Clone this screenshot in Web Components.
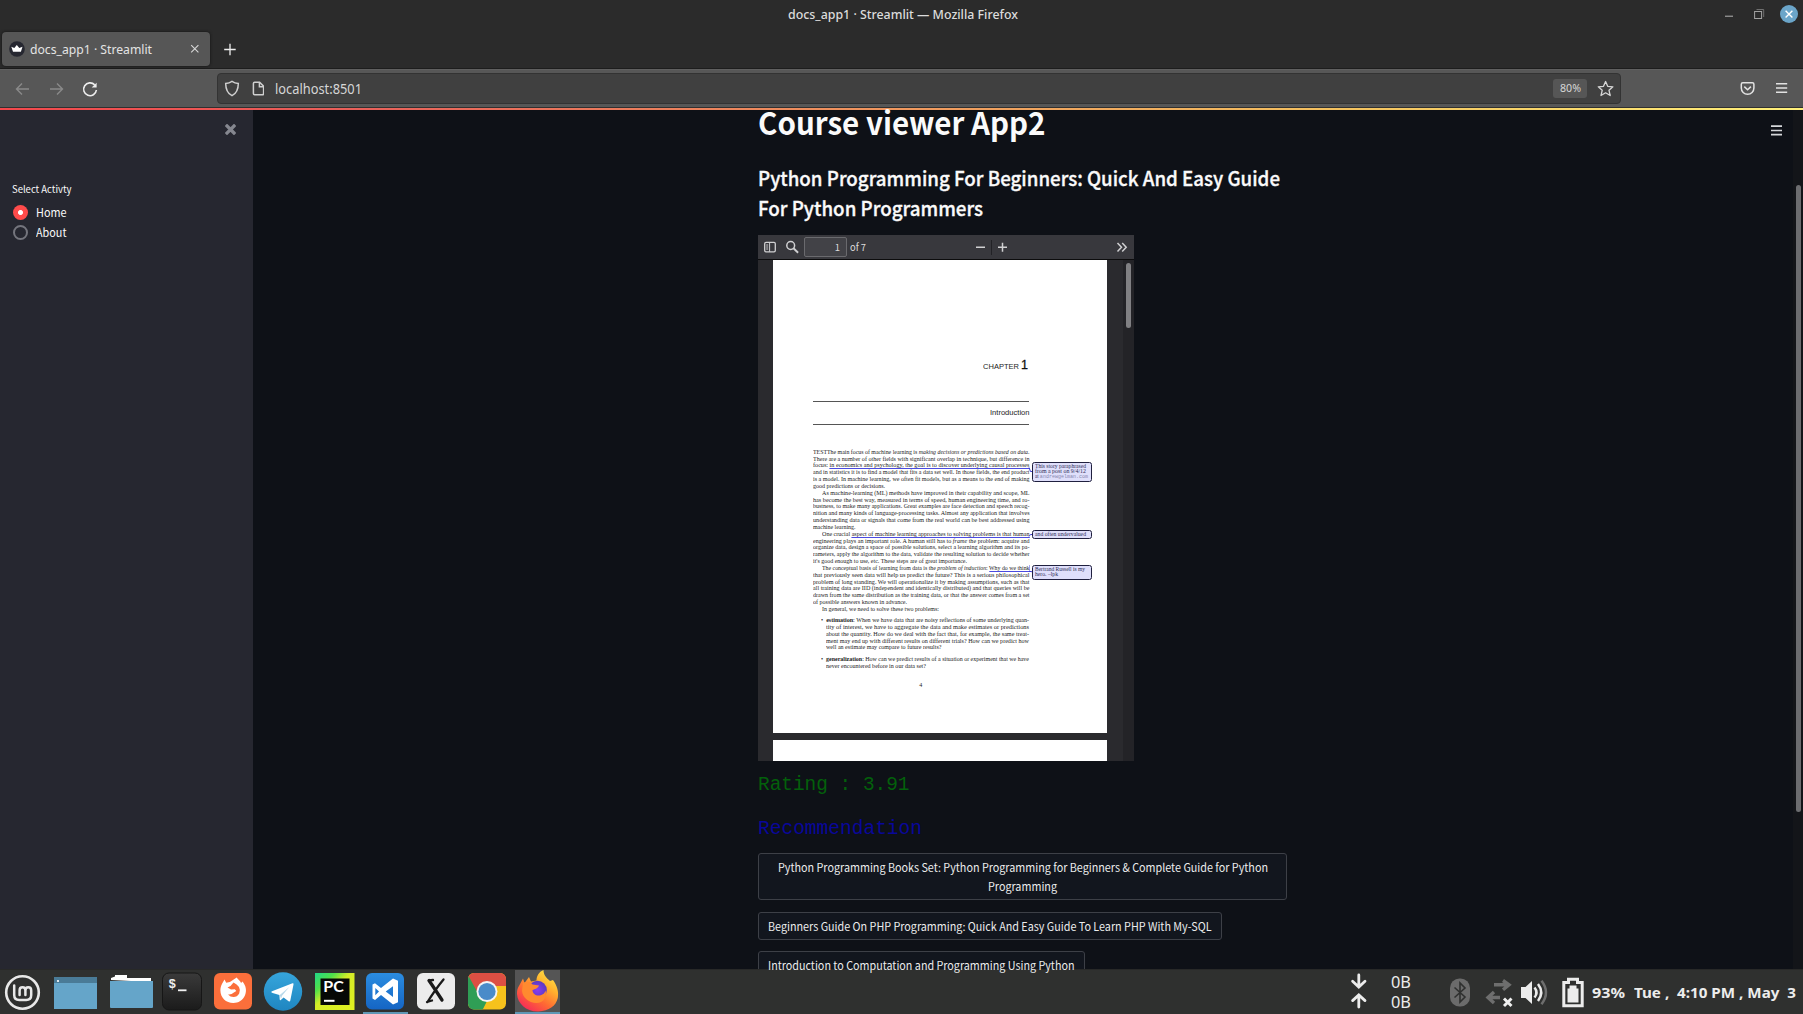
<!DOCTYPE html>
<html lang="en">
<head>
<meta charset="utf-8">
<title>docs_app1 · Streamlit</title>
<style>
html,body{margin:0;height:100%;overflow:hidden;background:#0e1117}
</style>
</head>
<body>
<desktop-screen></desktop-screen>
<script>
const define = (name, css, html) => customElements.define(name, class extends HTMLElement {
  constructor() {
    super();
    this.attachShadow({mode: 'open'}).innerHTML =
      `<style>*{box-sizing:border-box}svg{display:block;flex:none}${css}</style>${html}`;
  }
});
const UI = `"Noto Sans","Open Sans",sans-serif`;
const SRC = `"Noto Sans CJK JP","Noto Sans",sans-serif`;

define('desktop-screen', `
:host{display:flex;flex-direction:column;width:1803px;height:1014px;overflow:hidden;font-family:${UI}}
.page{display:flex;height:859px;flex:none;background:#0e1117}
`, `<window-title></window-title><tab-strip></tab-strip><nav-bar></nav-bar><accent-line></accent-line>
<div class="page"><side-panel></side-panel><app-main></app-main></div><task-bar></task-bar>`);

define('window-title', `
:host{display:flex;height:28px;background:#2b2b2b;color:#dcdcdc;justify-content:space-between;flex:none}
.sp{width:787.500px}
.t{font-size:13px;line-height:28px;font-weight:500;flex:1}
.b{display:flex;align-items:center;padding:0 5px 0 0}
`, `<div class="sp"></div><div class="t"><fit-text w="230">docs_app1 · Streamlit — Mozilla Firefox</fit-text></div>
<div class="b"><svg width="78" height="28" viewBox="1720 0 78 28" fill="none">
<path d="M1725 16.2h8" stroke="#b5b5b5" stroke-width="1"/>
<path d="M1756.5 9.5h7.2v7.5" stroke="#6f6f6f"/><rect x="1754.6" y="11.5" width="7" height="7" stroke="#a2a2a2"/>
<circle cx="1789" cy="14" r="9" fill="#6ba5c9"/><path d="M1785.6 10.7l6.8 6.8M1792.4 10.7l-6.8 6.8" stroke="#fff" stroke-width="1.4"/></svg></div>`);

define('tab-strip', `
:host{display:flex;height:41px;background:#2b2b2b;padding:4px 0 0 2px;gap:14px;flex:none;border-bottom:1px solid #1d1d1d}
.tab{width:208px;height:34px;border-radius:4px;background:#565656;display:flex;align-items:center;padding-left:7px;color:#e4e4e4;font-size:13px;box-shadow:0 0 3px #111}
.g{flex:1;margin-left:5px;line-height:34px}
`, `<div class="tab"><svg width="16" height="16" viewBox="0 0 16 16"><circle cx="8" cy="8" r="7.8" fill="#262730"/><path d="M2.3 5.7l3 1.4 2.5-3 2.5 3 3.2-1.4-1.6 5H4z" fill="#fff"/></svg>
<span class="g"><fit-text w="122">docs_app1 · Streamlit</fit-text></span>
<svg width="24" height="10" viewBox="0 0 24 10"><path d="M5.2 1.2l7.2 7.2M12.400 1.2L5.2 8.400" stroke="#d8d8d8" stroke-width="1.1"/></svg></div>
<svg width="12" height="34" viewBox="0 0 12 34"><path d="M.2 17.500h11.500M6 11.800v11.500" stroke="#eee" stroke-width="1.300"/></svg>`);

define('nav-bar', `
:host{display:flex;height:39px;background:#575757;border-bottom:1px solid #303030;flex:none;border-top:1px solid #606060}
.url{margin:3px 0 0 0;width:1404px;height:31px;border-radius:4px;background:#404040;border:1px solid #333;display:flex;align-items:center;color:#d6d6d6}
.u{font-size:14px;line-height:29px;margin-left:11px;flex:1}
.z{width:34px;height:19px;border-radius:3px;background:#565656;font-size:10.5px;line-height:19px;text-align:center;margin-right:10px}
`, `<svg width="217" height="37" viewBox="0 70 217 37" fill="none" stroke-width="1.400">
<path d="M29 89H16.500M22 83.500L16.500 89l5.500 5.500" stroke="#8a8a8a"/>
<path d="M50 89h12.500M57 83.500l5.500 5.500-5.500 5.500" stroke="#8a8a8a"/>
<path d="M96.400 90a6.400 6.400 0 1 1-1.700-5.100" stroke="#eee" stroke-width="1.600"/><path d="M96.600 82.800v4.800h-4.900z" fill="#eee"/></svg>
<div class="url"><svg width="46" height="20" viewBox="218 79 46 20" fill="none" stroke="#cfcfcf" stroke-width="1.500">
<path d="M232 81.400c-2 1.400-4.200 2-6.300 2 0 5.600 1.500 9.800 6.300 12.200 4.800-2.400 6.300-6.600 6.300-12.200-2.100 0-4.300-.6-6.300-2z"/>
<path d="M254.600 82.200h5l4 4v7.400q0 1.200-1.200 1.200h-7.800q-1.200 0-1.200-1.200v-10.200q0-1.200 1.200-1.200z"/><path d="M259.400 82.200v4.500h4.300"/></svg>
<span class="u"><fit-text w="87">localhost:8501</fit-text></span>
<span class="z"><fit-text w="21">80%</fit-text></span>
<svg width="23" height="18" viewBox="1597 80 23 18" fill="none"><path d="M1605.600 81.500l2.100 4.800 5.200.5-3.900 3.500 1.200 5.200-4.600-2.700-4.600 2.700 1.200-5.200-3.900-3.500 5.200-.5z" stroke="#d6d6d6" stroke-width="1.300" stroke-linejoin="round"/></svg></div>
<svg width="182" height="37" viewBox="1621 70 182 37" fill="none" stroke="#e2e2e2" stroke-width="1.500">
<path d="M1742.800 82.800h9.600q1.500 0 1.500 1.500v3.700a6.300 6.300 0 0 1-12.600 0v-3.700q0-1.500 1.500-1.500z"/><path d="M1744.300 86.600l3.300 3.200 3.300-3.200"/>
<path d="M1776 83.800h11.200M1776 88h11.200M1776 92.200h11.200" stroke-width="1.400"/></svg>`);

define('accent-line', `:host{display:block;height:2px;flex:none;background:linear-gradient(90deg,#f4484c 0%,#e9605a 20%,#f0985e 50%,#f4c35f 75%,#fff07a 100%)}`, ``);

define('side-panel', `
:host{display:flex;flex-direction:column;width:253px;background:#262730;color:#fafafa;font-family:${SRC};flex:none}
.x{display:flex;justify-content:flex-end;padding:14px 17px 0 0;height:70px}
.l{font-size:9.800px;line-height:18px;padding-left:12px;height:23px}
`, `<div class="x"><svg width="11" height="11" viewBox="0 0 11 11"><path d="M2 2l7 7M9 2L2 9" stroke="#85878f" stroke-width="3.300" stroke-linecap="square"/></svg></div>
<div class="l"><fit-text w="59.500">Select Activty</fit-text></div>
<radio-row on><fit-text w="30.500">Home</fit-text></radio-row><radio-row><fit-text w="30.500">About</fit-text></radio-row>`);

define('radio-row', `
:host{display:flex;align-items:center;height:19.500px;padding-left:13px;gap:8px;font-size:11.400px;line-height:19px}
i{width:15px;height:15px;border-radius:50%;border:2px solid #74757d;flex:none}
:host([on]) i{border:none;background:radial-gradient(circle,#fff 0 2.100px,#ff4b4b 2.900px)}
`, `<i></i><slot></slot>`);

define('app-main', `
:host{display:flex;flex:1;height:859px;background:#0e1117;color:#fafafa;font-family:${SRC}}
.col{width:529px;margin-left:505px;display:flex;flex-direction:column;align-items:flex-start}
h1,h2,p{margin:0;font-weight:inherit;flex:none}
h1{font-size:31.400px;line-height:23px;height:53px;font-weight:700}
h2{font-size:20px;line-height:29.500px;height:72px;font-weight:500;-webkit-text-stroke:.35px #fafafa}
h2 fit-text{display:block}
p{font-family:"Liberation Mono",monospace;font-size:19.400px;line-height:24px}
.g{color:#03600b;margin-top:12px;height:43.500px}.b{color:#09079a;height:36.500px}
.menu{margin:15px 11px 0 auto}
.bar{width:10px;background:#131519;padding:75px 2px 0 3px}
.bar i{display:block;height:627px;border-radius:3px;background:#6c6d70}
`, `<div class="col"><h1><fit-text w="287.500">Course viewer App2</fit-text></h1>
<h2><fit-text w="522">Python Programming For Beginners: Quick And Easy Guide</fit-text><fit-text w="225">For Python Programmers</fit-text></h2>
<pdf-viewer></pdf-viewer>
<p class="g"><fit-text w="151.500">Rating : 3.91</fit-text></p><p class="b"><fit-text w="164">Recommendation</fit-text></p>
<course-button style="width:529px;height:47px;margin-bottom:11.500px"><fit-text w="490">Python Programming Books Set: Python Programming for Beginners &amp; Complete Guide for Python</fit-text><fit-text w="69">Programming</fit-text></course-button>
<course-button style="width:464px;height:28px;margin-bottom:11.500px"><fit-text w="443.500">Beginners Guide On PHP Programming: Quick And Easy Guide To Learn PHP With My-SQL</fit-text></course-button>
<course-button style="width:327px;height:28px"><fit-text w="306.500">Introduction to Computation and Programming Using Python</fit-text></course-button></div>
<svg class="menu" width="11" height="11" viewBox="0 0 11 11"><path d="M0 1.200h11M0 5.500h11M0 9.600h11" stroke="#d5d7da" stroke-width="1.700"/></svg>
<div class="bar"><i></i></div>`);

define('course-button', `
:host{display:flex;box-sizing:border-box;flex-direction:column;align-items:center;flex:none;border:1px solid #3d4047;border-radius:3px;background:#12161e;padding-top:4px;font-size:11.400px;line-height:19px;color:#eceded}
`, `<slot></slot>`);

define('pdf-viewer', `
:host{display:flex;flex-direction:column;width:376px;height:526px;background:#2a2a2e;overflow:hidden;flex:none}
.tb{display:flex;height:25px;background:#38383d;border-bottom:1px solid #0c0c0d;align-items:center;font-size:9.500px;line-height:18px;color:#dcdcdc;flex:none}
.in{width:43px;height:20px;border:1px solid #6a6a6e;border-radius:2px;background:#424247;text-align:right;padding-right:6px}
.of{margin-left:3px;flex:1}
.v{display:flex;height:501px}
.pages{margin-left:15px;width:334px;display:flex;flex-direction:column;gap:7px}
.next{height:30px;background:#fff}
.sb{margin-left:auto;width:11px;background:#232327;padding:3px 3px 0}
.sb i{display:block;height:65px;border-radius:3px;background:#808083}
`, `<div class="tb"><svg width="46" height="24" viewBox="758 235 46 24" fill="none" stroke="#d0d0d2">
<rect x="764.700" y="242.400" width="10.600" height="9.400" rx="1.300" stroke-width="1.300"/><path d="M769.600 242.500v9.300M766.200 245h2M766.200 247h2M766.200 249h2" />
<circle cx="790.700" cy="245.500" r="3.900" stroke-width="1.500"/><path d="M793.500 248.300l4.600 4.400" stroke-width="1.900"/></svg>
<div class="in">1</div><div class="of"><fit-text w="16">of 7</fit-text></div>
<svg width="162" height="24" viewBox="972 235 162 24" fill="none" stroke="#d0d0d2" stroke-width="1.500">
<path d="M976 247.200h9M998 247.200h9M1002.500 242.700v9"/><path d="M991.500 240v15" stroke="#222226" stroke-width="1"/>
<path d="M1117.500 243l4 4.200-4 4.200M1122.200 243l4 4.200-4 4.200"/></svg></div>
<div class="v"><div class="pages"><pdf-page></pdf-page><div class="next"></div></div><div class="sb"><i></i></div></div>`);

const para = [
 [0,'TESTThe main focus of machine learning is <i>making decisions or predictions based on data</i>.'],
 [0,'There are a number of other fields with significant overlap in technique, but difference in'],
 [0,'focus: <u>in economics and psychology, the goal is to discover underlying causal processes</u>'],
 [0,'and in statistics it is to find a model that fits a data set well. In those fields, the end product'],
 [0,'is a model. In machine learning, we often fit models, but as a means to the end of making'],
 [0,'good predictions or decisions.',72],
 [9,'As machine-learning (ML) methods have improved in their capability and scope, ML'],
 [0,'has become the best way, measured in terms of speed, human engineering time, and ro-'],
 [0,'bustness, to make many applications. Great examples are face detection and speech recog-'],
 [0,'nition and many kinds of language-processing tasks. Almost any application that involves'],
 [0,'understanding data or signals that come from the real world can be best addressed using'],
 [0,'machine learning.',42.5],
 [9,'One crucial <u>aspect of machine learning approaches to solving problems is that human</u>'],
 [0,'engineering plays an important role. A human still has to <i>frame</i> the problem: acquire and'],
 [0,'organize data, design a space of possible solutions, select a learning algorithm and its pa-'],
 [0,'rameters, apply the algorithm to the data, validate the resulting solution to decide whether'],
 [0,"it's good enough to use, etc. These steps are of great importance.",154],
 [9,'The conceptual basis of learning from data is the <i>problem of induction</i>: <u>Why do we think</u>'],
 [0,'that previously seen data will help us predict the future? This is a serious philosophical'],
 [0,'problem of long standing. We will operationalize it by making assumptions, such as that'],
 [0,'all training data are IID (independent and identically distributed) and that queries will be'],
 [0,'drawn from the same distribution as the training data, or that the answer comes from a set'],
 [0,'of possible answers known in advance.',94],
 [9,'In general, we need to solve these two problems:',117],
];
const est = [
 [8.5,'•&nbsp; <b>estimation</b>: When we have data that are noisy reflections of some underlying quan-'],
 [13.5,'tity of interest, we have to aggregate the data and make estimates or predictions'],
 [13.5,'about the quantity. How do we deal with the fact that, for example, the same treat-'],
 [13.5,'ment may end up with different results on different trials? How can we predict how'],
 [13.5,'well an estimate may compare to future results?',115.5],
];
const gen = [
 [8.5,'•&nbsp; <b>generalization</b>: How can we predict results of a situation or experiment that we have'],
 [13.5,'never encountered before in our data set?',100],
];
const lines = a => a.map(([ind,t,w]) => `<div class="ln" style="padding-left:${ind}px"><fit-text w="${w || 216.5 - ind}">${t}</fit-text></div>`).join('');

define('pdf-page', `
:host{display:block;position:relative;height:473px;background:#fff;color:#1c1c1c;font-family:"Liberation Serif",serif;flex:none}
.body{width:216.500px;margin-left:39.500px;display:flex;flex-direction:column}
.ch{font:7.800px/16px "Liberation Sans",sans-serif;text-align:right;margin-top:97px;height:44px;padding-right:1px}
.ch b{font-size:12.500px;font-weight:400;color:#111;-webkit-text-stroke:.3px #111}
.in{font:7.500px/21px "Liberation Sans",sans-serif;text-align:right;border-top:1.500px solid #555;border-bottom:1.500px solid #555;height:24px;margin-bottom:23.800px}
.txt{font-size:6.400px;line-height:6.830px}
.ln{height:6.830px;white-space:nowrap;display:flex}
.txt u{text-decoration:none;box-shadow:0 1px #4a4ae0}
.gap{height:4.500px}
.no{font-size:6px;text-align:center;line-height:8px;margin-top:12px}
.notes{position:absolute;left:0;top:0}
.n{position:absolute;left:259px;width:59.500px;border:1.500px solid #20203f;border-radius:2.500px;background:#dfdffb;color:#2d2d55;font-size:5.600px;line-height:5.400px;padding:1px 1.500px;display:flex;flex-direction:column}
`, `<div class="body"><div class="ch"><fit-text w="36">CHAPTER</fit-text> <b>1</b></div><div class="in"><fit-text w="39.500">Introduction</fit-text></div>
<div class="txt">${lines(para)}<div class="gap"></div>${lines(est)}<div class="gap"></div>${lines(gen)}</div><div class="no">4</div></div>
<svg class="notes" width="334" height="473" fill="none" stroke="#3a3ad0" stroke-width="1"><path d="M256 207.500l1.500 4h3M256 276.500l1.500-2h3M256 311.500h2l3 1"/></svg>
<div class="n" style="top:201.500px;height:20px"><fit-text w="51">This story paraphrased</fit-text><fit-text w="51">from a post on 9/4/12</fit-text><fit-text w="53">at <span style="font-family:'Liberation Mono';color:#8888b0">andrewgelman.com</span></fit-text></div>
<div class="n" style="top:270px;height:9px;padding-top:.500px"><fit-text w="51">and often undervalued</fit-text></div>
<div class="n" style="top:305px;height:15px"><fit-text w="50">Bertrand Russell is my</fit-text><fit-text w="23">hero. –lpk</fit-text></div>`);

define('task-bar', `
:host{display:flex;height:45px;background:#2f302f;color:#ececec;flex:none;border-top:1px solid #282928}
.apps{flex:none;width:570px}
.tray{display:flex;margin-left:auto;height:44px}
.net{width:46px;font-size:15.500px;line-height:19.500px;display:flex;flex-direction:column;padding-top:3px}
.t{font-size:15px;font-weight:700;line-height:45px;padding-left:4px}
`, `<svg class="apps" width="570" height="44" viewBox="0 970 570 44">
<defs>
<linearGradient id="tg" x2="0" y2="1"><stop stop-color="#36a5db"/><stop offset="1" stop-color="#1f86c1"/></linearGradient>
<linearGradient id="vs" x2="0" y2="1"><stop stop-color="#2b8de0"/><stop offset="1" stop-color="#1565c4"/></linearGradient>
<linearGradient id="te" x2="0" y2="1"><stop stop-color="#3a3a3a"/><stop offset="1" stop-color="#1b1b1b"/></linearGradient>
<linearGradient id="pc" x2="1" y2="1"><stop stop-color="#21d789"/><stop offset=".25" stop-color="#4fe04a"/><stop offset=".45" stop-color="#d4ec27"/><stop offset="1" stop-color="#e0f020"/></linearGradient>
<linearGradient id="ff" x1=".9" y1="0" x2=".2" y2="1"><stop stop-color="#fff04a"/><stop offset=".35" stop-color="#ffb02e"/><stop offset=".65" stop-color="#ff6a33"/><stop offset="1" stop-color="#f5245c"/></linearGradient>
<radialGradient id="gl"><stop stop-color="#8a3bf0"/><stop offset="1" stop-color="#5b3bc0"/></radialGradient>
<clipPath id="cc"><rect x="468" y="973" width="38" height="36.500" rx="6"/></clipPath>
</defs>
<g fill="none" stroke="#e8e8e8"><circle cx="22.500" cy="992.500" r="16.300" stroke-width="2.600"/>
<path d="M14.200 985.500v9.500q0 5 5 5h7q5 0 5-5v-4.500q0-3.200-2.900-3.200t-2.900 3.200v4.500M25.400 990.500q0-3.200-2.900-3.200t-2.900 3.200v4.500" stroke-width="2.500" stroke-linecap="round"/></g>
<path d="M54 977h43v32H54z" fill="#65a5c9"/><path d="M54 977h43v6H54z" fill="#4a7b97"/><circle cx="58" cy="981" r="1.100" fill="#fff"/>
<path d="M111 980v-2l4-1.500v-1.500h12v3h24v4z" fill="#fff"/><path d="M110 981h43v26q0 1-1 1h-41q-1 0-1-1z" fill="#65a5c9"/>
<rect x="162.500" y="973" width="39" height="37" rx="6.500" fill="url(#te)" stroke="#161616"/>
<text x="168.500" y="988" font-family="Liberation Mono" font-weight="700" font-size="12.500" fill="#f0f0f0">$</text><path d="M178 990.300h8.500" stroke="#f0f0f0" stroke-width="1.800"/>
<rect x="214" y="973" width="38" height="36.500" rx="6" fill="#fb6f3b"/>
<path d="M222.200 983.500l2.300-4 1.700 3.300 3.700-.8 6.800-4.500c1 2 3.400 3 4.400 5.500l1.300-1.500c3.500 4 4.700 9 2.500 14-2.200 4.800-6.500 7.500-11.500 7.500-7.500 0-13-5.500-13-12.500 0-2.500.5-4.800 1.800-7z" fill="#fff"/>
<path d="M227.500 987.500l3-1.500 3-3.500q3.500 1.500 5.500 4.500 1.700 3 .2 6.500-2 3.500-5.700 3.500-3.200 0-5.500-2.500 3.500.5 5.500-1.700l2.800-1.800-1.500-1.800-3.800.2z" fill="#fb6f3b"/>
<circle cx="283" cy="991.500" r="19.200" fill="url(#tg)"/><path d="M272 991.300l20.500-8q1.300-.4 1 1.200l-3.200 16q-.4 1.400-1.700.7l-5-3.700-2.800 2.600q-1 .6-1.100-.8l-.3-4.200-6.800-2.200q-2.400-.8-.6-1.600z" fill="#fff"/><path d="M279.800 995l9.500-8-7.300 8.800-1 3.200z" fill="#b9d9ea"/>
<rect x="315" y="973" width="39.500" height="37" fill="url(#pc)"/><rect x="320.500" y="978.500" width="29" height="26.500" fill="#060806"/>
<text x="323.300" y="991.500" font-family="Lato,sans-serif" font-weight="700" font-size="14.500" fill="#fff" textLength="20.500" lengthAdjust="spacingAndGlyphs">PC</text><path d="M324 1000.800h10.500" stroke="#fff" stroke-width="2"/>
<rect x="366" y="973" width="38" height="36.500" rx="6" fill="url(#vs)"/>
<path d="M393 978.500l5 2.300v21.500l-5 2.300-12-9.500-6 4.800-2.500-1.300v-14l2.500-1.300 6 4.800zM393 986.200l-7.300 5.400 7.300 5.400zM375.300 988v7.200l3.700-3.600z" fill="#fff" fill-rule="evenodd"/>
<path d="M363 1013h45M515 1013h45" stroke="#5f97b5" stroke-width="2"/>
<rect x="417" y="973" width="38" height="36.500" rx="6" fill="#ececec"/><path d="M429 980.500q5.500 8 13 19.500" stroke="#1a1a1a" stroke-width="3.300" fill="none" stroke-linecap="round"/><path d="M443.500 979.500q-7.500 9-16 22.500M429 980.300l4-.3M427 1002l5-1.500" stroke="#1a1a1a" stroke-width="2.300" fill="none" stroke-linecap="round"/>
<g clip-path="url(#cc)"><path d="M468 973h38v37h-38z" fill="#f6c21c"/><path d="M468 973h38v13h-19l-11 6-8-15z" fill="#dd4f43"/><path d="M468 975l11 20 8 6-5 10h-14z" fill="#2f9e55"/></g>
<circle cx="487" cy="991.500" r="10.500" fill="#f4f4f4"/><circle cx="487" cy="991.500" r="8.600" fill="#4a8bc9"/>
<rect x="515" y="970" width="45" height="42" fill="#555"/>
<path d="M519.500 985l3.500-6.500 1.500 4.500 4.500-6 2 4.500 5.500-1c0-5 3-9 7-10.500 0 5 3 8 6.500 11l3-1c4 5.500 6 12 4.800 18-1.800 8-9 13-19.300 13.500-12 .5-21-8-21.500-17.500-.1-3.500.5-6 2.500-9z" fill="url(#ff)"/>
<circle cx="537.500" cy="990" r="9.300" fill="url(#gl)"/><path d="M523 983c4-2.500 8-1 9.500 1.500l6.500 1c-1 3-4 3.500-6.500 4.500 0 3.500 3.500 6 7 5.500 3.500-.3 5.500-3 6-5 2 6-2 12.500-9 12.500-8 0-14-6-14.500-12z" fill="#ff8a2f"/>
</svg>
<div class="tray"><svg width="62" height="44" viewBox="1329 970 62 44" fill="none" stroke="#ececec" stroke-width="2.800" stroke-linecap="round"><path d="M1358.800 975v11M1352.600 981.300l6.200 5.700 6.200-5.700M1358.800 1007v-11M1352.600 1000.600l6.200-5.700 6.200 5.700"/></svg>
<div class="net"><fit-text w="20">0B</fit-text><fit-text w="20">0B</fit-text></div>
<svg width="151" height="44" viewBox="1437 970 151 44" fill="none">
<rect x="1450" y="978.500" width="20" height="28" rx="9.500" fill="#6b6b6b"/><path d="M1454.500 987.500l10.500 9.500-5 5v-19l5 5-10.500 9.500" stroke="#2f302f" stroke-width="1.600"/>
<path d="M1494 984.800h13.500M1503 980.500l6 4.300-6 5M1500 997.500h-11.500M1494 992l-6 5.500 6 5.500" stroke="#6e6e6e" stroke-width="3.400"/><path d="M1504 998.500l7.500 7.500M1511.500 998.500l-7.500 7.500" stroke="#f0f0f0" stroke-width="2.900"/>
<path d="M1521 987h4.500l6.500-6v23l-6.500-6h-4.500z" fill="#ececec"/><path d="M1534.500 987.500q4 5 0 10M1538 984q6.500 8.500 0 17" stroke="#ececec" stroke-width="2.500"/><path d="M1541.500 980.800q9 11.700 0 23.400" stroke="#6e6e6e" stroke-width="2.500"/>
<path d="M1568.500 979.300h9v3.200h4.700v23.200h-18.400v-23.200h4.700z" stroke="#ececec" stroke-width="3"/><path d="M1569.500 985.500h7v3h2v14h-11v-14h2z" fill="#ececec"/></svg>
<div class="t" style="width:46px"><fit-text w="33">93%</fit-text></div><div class="t" style="width:169px;padding:0"><fit-text w="162">Tue&nbsp;, &nbsp;4:10 PM&nbsp;, May &nbsp;3</fit-text></div></div>`);

// Text run condensed or expanded horizontally to the width given in its "w" attribute.
customElements.define('fit-text', class extends HTMLElement {
  constructor() {
    super();
    this.attachShadow({mode: 'open'}).innerHTML =
      '<style>:host{display:inline-block;white-space:nowrap;flex:none;text-align:left}span{display:inline-block;transform-origin:0 50%}</style><span><slot></slot></span>';
  }
  connectedCallback() {
    const s = this.shadowRoot.querySelector('span');
    const w = parseFloat(this.getAttribute('w'));
    const n = s.getBoundingClientRect().width;
    this.style.width = w + 'px';
    if (n) s.style.transform = `scaleX(${w / n})`;
  }
});
</script>
</body>
</html>
